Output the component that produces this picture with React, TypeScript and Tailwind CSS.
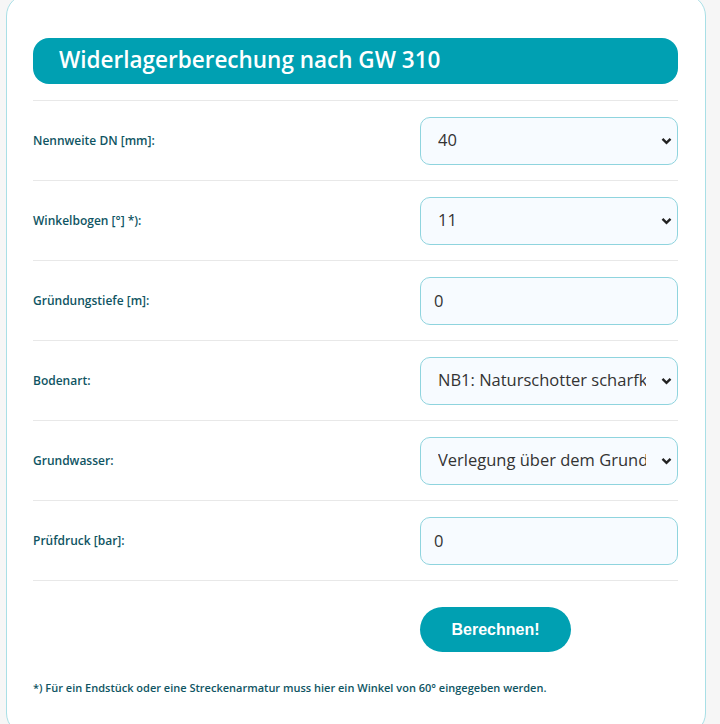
import { useState } from 'react'

const fields = [
  { label: 'Nennweite DN [mm]:', type: 'select', value: '40', options: ['40', '50', '65', '80', '100', '125', '150', '200'] },
  { label: 'Winkelbogen [°] *):', type: 'select', value: '11', options: ['11', '22', '30', '45', '60', '90'] },
  { label: 'Gründungstiefe [m]:', type: 'input', value: '0' },
  { label: 'Bodenart:', type: 'select', value: 'NB1: Naturschotter scharfkantig', options: ['NB1: Naturschotter scharfkantig', 'NB2: Naturkies rund'] },
  { label: 'Grundwasser:', type: 'select', value: 'Verlegung über dem Grundwasser', options: ['Verlegung über dem Grundwasser', 'Verlegung im Grundwasser'] },
  { label: 'Prüfdruck [bar]:', type: 'input', value: '0' },
]

function Chevron() {
  return (
    <svg className="pointer-events-none absolute right-[6px] top-1/2 -translate-y-1/2" width="11" height="8" viewBox="0 0 11 8">
      <path d="M1.5 1.8 5.5 5.8 9.5 1.8" fill="none" stroke="#222" strokeWidth="2.4" />
    </svg>
  )
}

export default function App() {
  const [values, setValues] = useState(() => fields.map(f => f.value))

  return (
    <div className="min-h-screen bg-[#f6f6f6] font-['Open_Sans',sans-serif]">
      <div className="ml-[6px] -mt-[6px] w-[700px] rounded-[22px] border border-[#a9dfe6] bg-white pt-[43px] pb-[37px] pl-[26px] pr-[27px]">
        <div className="flex h-[46px] items-center rounded-[16px] bg-[#00a0b2] pl-[26px] pb-[2px] text-[22.5px] font-semibold text-white">
          Widerlagerberechung nach GW 310
        </div>

        <div className="mt-[16px]">
          {fields.map((f, i) => (
            <div key={f.label} className="flex h-[80px] items-center justify-between border-t border-[#e8e8e8]">
              <label className="text-[12px] font-semibold text-[#0f5563]">{f.label}</label>
              <div className="relative w-[258px]">
                {f.type === 'select' ? (
                  <>
                    <select
                      value={values[i]}
                      onChange={e => setValues(v => v.map((x, j) => (j === i ? e.target.value : x)))}
                      className="h-[48px] w-full appearance-none overflow-hidden whitespace-nowrap rounded-[10px] border border-[#8fd4de] bg-[#f7fbff] pl-[17px] pr-[31px] text-[16.5px] text-[#333]"
                    >
                      {f.options!.map(o => <option key={o}>{o}</option>)}
                    </select>
                    <Chevron />
                  </>
                ) : (
                  <input
                    value={values[i]}
                    onChange={e => setValues(v => v.map((x, j) => (j === i ? e.target.value : x)))}
                    className="h-[48px] w-full rounded-[10px] border border-[#8fd4de] bg-[#f7fbff] px-[13px] text-[16.5px] text-[#333] outline-none"
                  />
                )}
              </div>
            </div>
          ))}
        </div>

        <div className="flex justify-end border-t border-[#e8e8e8] pt-[26px] pr-[107px]">
          <button className="h-[45px] w-[151px] rounded-full bg-[#00a0b2] font-['Liberation_Sans',sans-serif] text-[16px] font-bold text-white">
            Berechnen!
          </button>
        </div>

        <p className="mt-[28px] text-[11px] font-semibold text-[#0f5563]">
          *) Für ein Endstück oder eine Streckenarmatur muss hier ein Winkel von 60° eingegeben werden.
        </p>
      </div>
    </div>
  )
}
